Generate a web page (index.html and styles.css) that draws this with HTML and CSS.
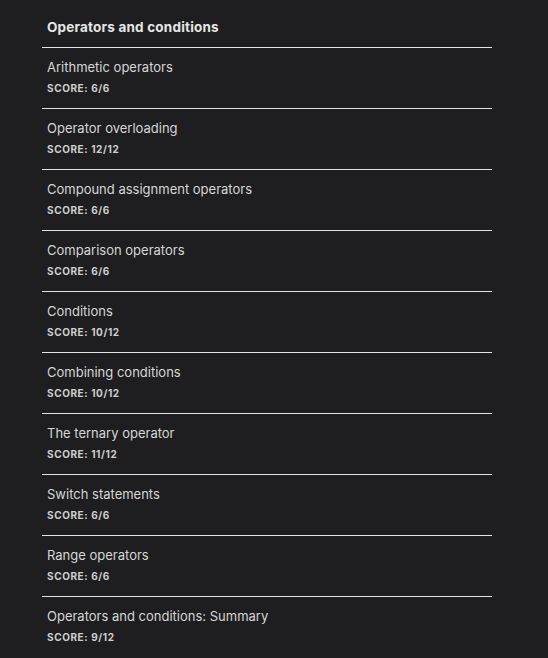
FILE: index.html
```html
<!DOCTYPE html>
<html>
<head>
<meta charset="utf-8">
<link rel="stylesheet" href="styles.css">
</head>
<body>
<div class="section">
  <div class="section-title">Operators and conditions</div>
  <ul class="list">
    <li class="item"><div class="item-title">Arithmetic operators</div><div class="score">Score: 6/6</div></li>
    <li class="item"><div class="item-title">Operator overloading</div><div class="score">Score: 12/12</div></li>
    <li class="item"><div class="item-title">Compound assignment operators</div><div class="score">Score: 6/6</div></li>
    <li class="item"><div class="item-title">Comparison operators</div><div class="score">Score: 6/6</div></li>
    <li class="item"><div class="item-title">Conditions</div><div class="score">Score: 10/12</div></li>
    <li class="item"><div class="item-title">Combining conditions</div><div class="score">Score: 10/12</div></li>
    <li class="item"><div class="item-title">The ternary operator</div><div class="score">Score: 11/12</div></li>
    <li class="item"><div class="item-title">Switch statements</div><div class="score">Score: 6/6</div></li>
    <li class="item"><div class="item-title">Range operators</div><div class="score">Score: 6/6</div></li>
    <li class="item"><div class="item-title">Operators and conditions: Summary</div><div class="score">Score: 9/12</div></li>
  </ul>
</div>
</body>
</html>
```

FILE: styles.css
```css
html, body {
  margin: 0;
  padding: 0;
  background: #1e1e20;
}
body {
  font-family: Inter, "Noto Sans", sans-serif;
  color: #d6d6d6;
}
.section {
  margin-left: 42px;
  width: 450px;
}
.section-title {
  padding: 19px 5px 12px;
  line-height: 16px;
  font-size: 13.5px;
  font-weight: 700;
  letter-spacing: 0.2px;
  color: #e6e6e6;
  border-bottom: 1px solid #e4e4e4;
  height: 16px;
}
.list {
  list-style: none;
  margin: 0;
  padding: 0;
}
.item {
  padding: 11px 5px 13px;
  border-bottom: 1px solid #e4e4e4;
}
.item:last-child {
  border-bottom: none;
}
.item-title {
  font-size: 13px;
  line-height: 16px;
  color: #d6d6d6;
}
.score {
  margin-top: 6px;
  font-size: 10px;
  line-height: 14px;
  font-weight: 700;
  text-transform: uppercase;
  letter-spacing: 0.6px;
  color: #cfcfcf;
}
```
